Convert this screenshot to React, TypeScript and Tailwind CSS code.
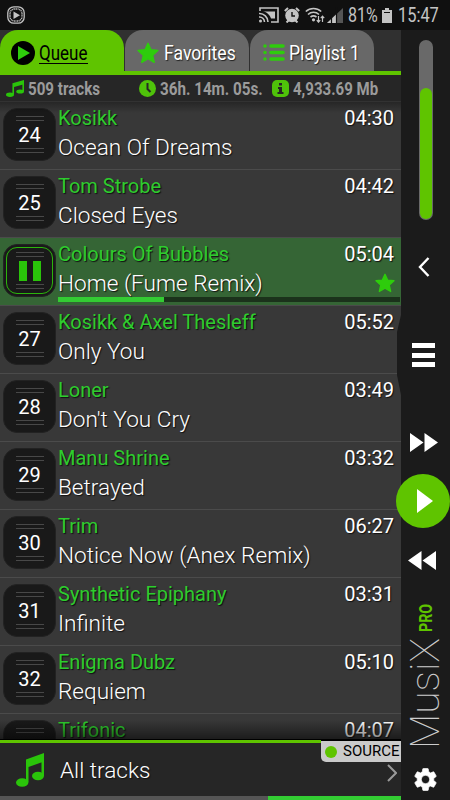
import React from "react";
import { clsx } from "clsx";

interface Track {
  no: number;
  artist: string;
  title?: string;
  time: string;
  playing?: boolean;
}

const tracks: Track[] = [
  { no: 24, artist: "Kosikk", title: "Ocean Of Dreams", time: "04:30" },
  { no: 25, artist: "Tom Strobe", title: "Closed Eyes", time: "04:42" },
  { no: 26, artist: "Colours Of Bubbles", title: "Home (Fume Remix)", time: "05:04", playing: true },
  { no: 27, artist: "Kosikk & Axel Thesleff", title: "Only You", time: "05:52" },
  { no: 28, artist: "Loner", title: "Don't You Cry", time: "03:49" },
  { no: 29, artist: "Manu Shrine", title: "Betrayed", time: "03:32" },
  { no: 30, artist: "Trim", title: "Notice Now (Anex Remix)", time: "06:27" },
  { no: 31, artist: "Synthetic Epiphany", title: "Infinite", time: "03:31" },
  { no: 32, artist: "Enigma Dubz", title: "Requiem", time: "05:10" },
  { no: 33, artist: "Trifonic", time: "04:07" },
];

const StarIcon = ({ className }: { className?: string }) => (
  <svg viewBox="0 0 24 24" className={className} fill="#2ecc0c">
    <path
      d="M12 1.500l3.200 7 7.600.8-5.700 5.200 1.700 7.700L12 18.200l-6.800 4 1.700-7.700L1.200 9.300l7.600-.8z"
      stroke="#2ecc0c"
      strokeWidth="1.600"
      strokeLinejoin="round"
    />
  </svg>
);

const NoteIcon = ({ className }: { className?: string }) => (
  <svg viewBox="0 0 28 34" preserveAspectRatio="none" className={className} fill="#2ac40a">
    <path d="M10 6.500L28 0v8.500L12.500 14v15H10z" />
    <path d="M25.500 5H28v18h-2.500z" />
    <ellipse cx="6.200" cy="29.500" rx="6.200" ry="4.300" />
    <ellipse cx="22" cy="23" rx="6" ry="4.200" />
  </svg>
);

const StatusBar = () => (
  <div className="flex h-[30px] items-center bg-[#101010] pl-[7px] text-[#c4c4c4]">
    <svg viewBox="0 0 18 18" className="size-[18px]" fill="none" stroke="#c4c4c4">
      <rect x="0.800" y="0.800" width="16.400" height="16.400" rx="6" strokeWidth="1.300" />
      <rect x="3" y="3" width="12" height="12" rx="4.500" strokeWidth="1.500" strokeDasharray="1 .6" />
      <path d="M6.500 5.500v7.500l6.500-3.700z" fill="#c4c4c4" stroke="none" />
    </svg>
    <svg viewBox="0 0 20 16" className="ml-[234px] h-[16px] w-5" fill="none" stroke="#c4c4c4" strokeWidth="1.600">
      <path d="M1 4V1h18v14h-7" />
      <path d="M4 4.500h12v7h-4C11 8 8 5 4 4.500z" fill="#c4c4c4" stroke="none" />
      <path d="M0 6.500a8.500 8.500 0 0 1 9 8.500M0 10a5 5 0 0 1 5.500 5" />
      <circle cx="1.500" cy="14" r="1.500" fill="#c4c4c4" stroke="none" />
    </svg>
    <svg viewBox="0 0 16 16" className="ml-[5px] size-4">
      <circle cx="8" cy="8.500" r="6.800" fill="#c4c4c4" />
      <path d="M.8 4L4 1M15.200 4L12 1M2.500 15.500l2-2M13.500 15.500l-2-2" stroke="#c4c4c4" strokeWidth="2" />
      <path d="M8 5v4h3" stroke="#101010" strokeWidth="1.400" fill="none" />
    </svg>
    <svg viewBox="0 0 20 16" className="ml-[5px] h-4 w-5" fill="none" stroke="#c4c4c4" strokeWidth="1.600">
      <path d="M.8 4.500a11.500 11.500 0 0 1 15.400 0M3 7.500a8 8 0 0 1 11 0M5.500 10a5 5 0 0 1 6 0" />
      <circle cx="8.500" cy="12.800" r="1.600" fill="#c4c4c4" stroke="none" />
      <path d="M13.500 9v6M11.800 13.200l1.700 2 1.700-2M17.500 15V9.500M15.800 11.200l1.700-2 1.700 2" strokeWidth="1.200" />
    </svg>
    <svg viewBox="0 0 16 16" className="ml-[2px] h-4 w-4">
      <path d="M0 16L16 1v15z" fill="#555" />
      <path d="M0 16l9-8.500V16z" fill="#c4c4c4" />
      <path d="M4.500 6v10M9.500 0v16" stroke="#101010" strokeWidth="1.200" />
    </svg>
    <span className="ml-[5px] w-[30px] text-[20px] leading-none whitespace-nowrap">
      <span className="inline-block origin-left scale-x-[0.8]">81%</span>
    </span>
    <svg viewBox="0 0 10 15" className="ml-[4px] h-[15px] w-[10px]" fill="#c4c4c4">
      <path d="M3 0h4v2h3v13H0V2h3z" />
      <path d="M2 4.500h6" stroke="#101010" strokeWidth="1" />
    </svg>
    <span className="ml-[6px] w-[41px] text-[20px] leading-none whitespace-nowrap">
      <span className="inline-block origin-left scale-x-[0.82]">15:47</span>
    </span>
  </div>
);

const Tabs = () => (
  <div className="flex h-[45px] gap-[1px] border-b-4 border-[#5fc400] bg-[#303030]">
    <div className="flex w-[124px] items-center rounded-t-[18px] bg-[#5fc400] pl-[11px] pt-[4px]">
      <svg viewBox="0 0 24 24" className="size-6">
        <circle cx="12" cy="12" r="12" fill="#000" />
        <path d="M7 5v14l12-7z" fill="#2ecc0c" />
      </svg>
      <span className="mt-[2px] ml-1 w-[49px] border-b border-black text-xl leading-[19px] whitespace-nowrap text-black">
        <span className="inline-block origin-left scale-x-[0.85]">Queue</span>
      </span>
    </div>
    <div className="flex w-[124px] items-center rounded-t-[18px] bg-[#686868] pl-3 pt-[4px]">
      <StarIcon className="size-[22px]" />
      <span className="ml-[5px] origin-left scale-x-[0.88] text-xl whitespace-nowrap text-white [text-shadow:1px_1px_1px_#222]">
        Favorites
      </span>
    </div>
    <div className="flex w-[124px] items-center rounded-t-[18px] bg-[#686868] pl-[13px] pt-[4px]">
      <svg viewBox="0 0 22 17" className="h-[17px] w-[22px]" stroke="#2ecc0c" strokeWidth="3.600" strokeLinecap="round">
        <path d="M2 2h.01M2 8.500h.01M2 15h.01M8 2h12M8 8.500h12M8 15h12" />
      </svg>
      <span className="ml-[4px] origin-left scale-x-[0.88] text-xl whitespace-nowrap text-white [text-shadow:1px_1px_1px_#222]">
        Playlist 1
      </span>
    </div>
  </div>
);

const Stats = () => (
  <div className="flex h-[26px] items-center bg-[#262626] pl-[6px] text-[18px] font-bold whitespace-nowrap text-[#9b9b9b]">
    <NoteIcon className="h-[17px] w-[18px]" />
    <span className="ml-[4px] w-[111px]">
      <span className="inline-block origin-left scale-x-[0.84]">509 tracks</span>
    </span>
    <svg viewBox="0 0 17 17" className="size-[17px]">
      <circle cx="8.500" cy="8.500" r="8.500" fill="#4fc20a" />
      <path d="M8.500 3v6l3 3" stroke="#262626" strokeWidth="2" fill="none" />
    </svg>
    <span className="ml-[4px] w-[112px]">
      <span className="inline-block origin-left scale-x-[0.845]">36h. 14m. 05s.</span>
    </span>
    <svg viewBox="0 0 17 17" className="size-[17px]">
      <rect width="17" height="17" rx="5" fill="#4fc20a" />
      <path d="M7 3h3v2.500H7zM6 7h4v5h1.500v2h-6v-2H7V9H6z" fill="#262626" />
    </svg>
    <span className="ml-[4px]">
      <span className="inline-block origin-left scale-x-[0.835]">4,933.69 Mb</span>
    </span>
  </div>
);

const Badge = ({ track }: { track: Track }) => (
  <div className="ml-[3px] mt-[6px] flex size-[53px] shrink-0 rounded-[14px] border border-[#222] bg-[#191919] p-[2px]">
    <div
      className={clsx(
        "flex flex-1 flex-col items-center justify-between rounded-[11px] border py-[3px]",
        track.playing ? "border-[#2bb50c]" : "border-transparent"
      )}
    >
      <div className="mt-px h-[5px] w-7 border-y border-[#484848]" />
      {track.playing ? (
        <div className="flex gap-[6px]">
          <div className="h-5 w-2 bg-[#2ac40a]" />
          <div className="h-5 w-2 bg-[#2ac40a]" />
        </div>
      ) : (
        <span className="pt-px text-xl leading-none text-white">{track.no}</span>
      )}
      <div className="mb-px h-[5px] w-7 border-y border-[#484848]" />
    </div>
  </div>
);

const TrackRow = ({ track }: { track: Track }) => (
  <div
    className={clsx(
      "flex h-[68px] shrink-0 border-t border-[#4b4b4b] whitespace-nowrap",
      track.playing ? "bg-[#356535]" : "bg-[#383838]"
    )}
  >
    <Badge track={track} />
    <div className="ml-[2px] flex-1 pt-[4px]">
      <div className="flex h-6 justify-between pr-[7px] text-xl leading-6 [text-shadow:1px_1px_1px_#111]">
        <span className="text-[#2ecc2e]">{track.artist}</span>
        <span className="text-white">{track.time}</span>
      </div>
      {track.title && (
        <div className="mt-[5px] flex h-[26px] items-center justify-between pr-[6px] text-[22.6px] leading-[26px] font-light text-white [text-shadow:1px_1px_1px_#111]">
          <span>{track.title}</span>
          {track.playing && <StarIcon className="-mt-[2px] size-[20px]" />}
        </div>
      )}
      {track.playing && (
        <div className="mr-px h-[5px] bg-[#1b321b]">
          <div className="h-full w-[31%] bg-[#33cc33]" />
        </div>
      )}
    </div>
  </div>
);

const Footer = () => (
  <div className="relative flex h-[60px] flex-col border-t-[3px] border-[#5fc400] bg-[#262626]">
    <div className="flex flex-1 items-center pl-4">
      <NoteIcon className="h-[34px] w-[28px]" />
      <span className="mt-[3px] ml-4 flex-1 text-[22.6px] font-light text-white [text-shadow:1px_1px_1px_#111]">
        All tracks
      </span>
      <svg viewBox="0 0 10 18" className="mr-[4px] mt-[7px] h-[18px] w-[10px]" fill="none" stroke="#999" strokeWidth="2">
        <path d="M1 1l8 8-8 8" />
      </svg>
    </div>
    <div className="flex h-1 bg-[#555]">
      <div className="ml-auto w-[133px] bg-[#33cc33]" />
    </div>
    <div className="absolute -top-[3px] right-0 flex h-[22px] w-[80px] items-center rounded-bl-[5px] border-t border-black bg-[#cacaca] pl-1 text-[15px] text-black">
      <span className="size-3 shrink-0 rounded-full bg-[#5fc400]" />
      <span className="ml-[6px]">SOURCE</span>
    </div>
  </div>
);

const Sidebar = () => (
  <div className="relative flex w-[49px] shrink-0 flex-col items-center bg-[#1b1b1b]">
    <svg viewBox="0 0 4 80" className="absolute top-[285px] -left-1 h-[80px] w-1" fill="#1b1b1b">
      <path d="M4 0L0 17v43l4 20z" />
    </svg>
    <div className="mt-[10px] flex h-[180px] w-[14px] shrink-0 items-end rounded-full bg-[#696969] p-px">
      <div className="h-[131px] w-full rounded-full bg-[#5fc400]" />
    </div>
    <svg viewBox="0 0 12 20" className="mt-[37px] mr-1 h-5 w-3 shrink-0" fill="none" stroke="#fff" strokeWidth="2.400">
      <path d="M10.500 1L2 10l8.500 9" />
    </svg>
    <div className="mt-[66px] mr-1 flex h-6 w-[23px] shrink-0 flex-col justify-between">
      <div className="h-[5px] bg-white" />
      <div className="h-[5px] bg-white" />
      <div className="h-[5px] bg-white" />
    </div>
    <svg viewBox="0 0 28 19" className="mt-[66px] mr-[3px] h-[19px] w-7 shrink-0" fill="#fff">
      <path d="M0 0v19l13.500-9.500zM14.500 0v19L28 9.500z" />
    </svg>
    <div className="mt-[22px] mr-[5px] flex size-[54px] shrink-0 items-center justify-center rounded-full bg-[#5fc400]">
      <svg viewBox="0 0 16 24" className="ml-1 h-6 w-4" fill="#fff">
        <path d="M0 0v24l16-12z" />
      </svg>
    </div>
    <svg viewBox="0 0 28 19" className="mt-[23px] mr-[7px] h-[19px] w-7 shrink-0" fill="#fff">
      <path d="M13.500 0v19L0 9.500zM28 0v19L14.500 9.500z" />
    </svg>
    <div className="mt-[31px] flex h-[148px] w-[49px] shrink-0 rotate-180 items-center whitespace-nowrap [writing-mode:vertical-rl]">
      <span className="h-[117px] shrink-0 text-[41px] leading-[49px] font-thin text-[#ccc]">MusiX</span>
      <span className="origin-top scale-y-[0.75] text-[19px] leading-[49px] font-bold text-[#5fc400]">PRO</span>
    </div>
    <svg viewBox="2 2 20 20" className="mt-[19px] mr-px size-[23px] shrink-0" fill="#fff" stroke="#fff" strokeWidth=".6">
      <path d="M19.140 12.940c.04-.3.060-.61.060-.94s-.02-.64-.07-.94l2.030-1.580a.49.49 0 0 0 .12-.61l-1.920-3.320a.49.49 0 0 0-.59-.22l-2.390.96a7 7 0 0 0-1.620-.94l-.36-2.540A.48.48 0 0 0 13.920 2.400h-3.840a.48.48 0 0 0-.48.41l-.36 2.540c-.59.240-1.130.57-1.620.94l-2.390-.96a.49.49 0 0 0-.59.22L2.720 8.870a.48.48 0 0 0 .12.610l2.030 1.580c-.05.3-.07.62-.07.94s.02.64.07.94l-2.030 1.580a.49.49 0 0 0-.12.610l1.920 3.320c.12.22.37.290.59.220l2.390-.96c.5.380 1.030.7 1.620.94l.36 2.540c.05.240.240.410.480.410h3.840c.240 0 .440-.17.470-.41l.36-2.540a7 7 0 0 0 1.620-.94l2.390.96c.22.080.470 0 .590-.22l1.920-3.320a.48.48 0 0 0-.12-.61zM12 15.600A3.600 3.600 0 1 1 12 8.400a3.600 3.600 0 0 1 0 7.200z" />
    </svg>
  </div>
);

export default function App() {
  return (
    <div className="flex h-[800px] w-[450px] flex-col overflow-hidden bg-[#1b1b1b] font-[Roboto,sans-serif]">
      <StatusBar />
      <div className="flex min-h-0 flex-1">
        <div className="flex w-[401px] shrink-0 flex-col">
          <Tabs />
          <Stats />
          <div className="relative flex min-h-0 flex-1 flex-col overflow-hidden">
            {tracks.map((track) => (
              <TrackRow key={track.no} track={track} />
            ))}
            {/* edge shadows of the scroll area */}
            <div className="absolute inset-x-0 top-0 h-3 bg-linear-to-b from-black/35 to-transparent" />
            <div className="absolute inset-x-0 bottom-0 h-5 border-b border-black bg-linear-to-t from-black/50 to-transparent" />
          </div>
          <Footer />
        </div>
        <Sidebar />
      </div>
    </div>
  );
}
